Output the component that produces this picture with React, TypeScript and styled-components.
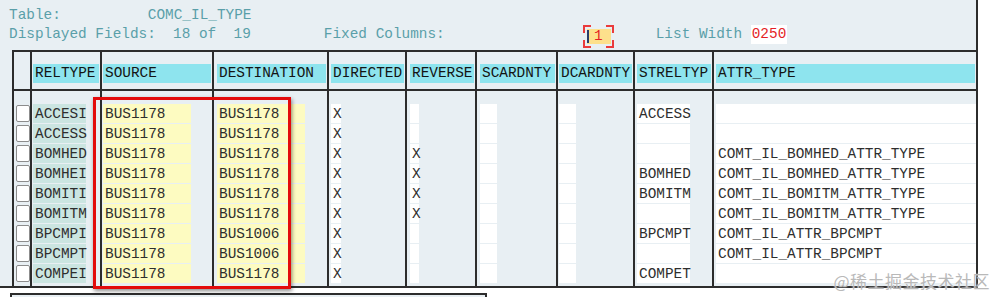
import styled, { createGlobalStyle } from "styled-components";

const GlobalStyle = createGlobalStyle`
  html, body {
    margin: 0;
    padding: 0;
    background: #ffffff;
  }
  body {
    font-family: "Liberation Mono", "DejaVu Sans Mono", monospace;
    font-size: 14.4px;
  }
`;

const Page = styled.div`
  position: relative;
  width: 994px;
  height: 297px;
  overflow: hidden;
  background: #ffffff;
`;

const Panel = styled.div`
  width: 976px;
  height: 286px;
  background: #e8eff3;
  border-right: 2px solid #2c2c2c;
  border-bottom: 2px solid #2c2c2c;
  display: flex;
  flex-direction: column;
`;

const Info = styled.div`
  height: 50px;
  padding: 6px 0 0 9px;
  box-sizing: border-box;
  display: flex;
  flex-direction: column;
`;

const InfoRow = styled.div`
  height: 19px;
  display: flex;
  align-items: center;
  white-space: pre;
  line-height: 19px;
`;

const Label = styled.span<{ $at?: number }>`
  color: #5a9fa9;
  margin-left: ${(p) => p.$at ?? 0}px;
`;

const FixedInput = styled.span`
  position: relative;
  width: 31px;
  height: 23px;
  margin: 0 0 -4px 138px;
  display: flex;
  align-items: center;
  justify-content: center;
  flex-shrink: 0;

  &::before {
    content: "";
    position: absolute;
    left: 4px;
    right: 3px;
    top: 4px;
    bottom: 4px;
    background: #fde08c;
  }
`;

const Caret = styled.span`
  position: absolute;
  left: 4px;
  top: 5px;
  width: 2px;
  height: 13px;
  background: #2a3d6a;
`;

const Corner = styled.span<{ $v: "top" | "bottom"; $h: "left" | "right" }>`
  position: absolute;
  ${(p) => p.$v}: 0;
  ${(p) => p.$h}: 0;
  width: 6px;
  height: 6px;
  border-${(p) => p.$v}: 2px solid #ea3b3b;
  border-${(p) => p.$h}: 2px solid #ea3b3b;
`;

const RedValue = styled.span<{ $bg?: string }>`
  position: relative;
  color: #e41e26;
  background: ${(p) => p.$bg ?? "transparent"};
  padding: 0 1px;
`;

const Table = styled.div`
  margin-left: 12px;
  flex: 1;
  display: grid;
  grid-template-columns: 18px 70px 112px 115px 78px 70px 81px 77px 79px 1fr;
`;

const Column = styled.div`
  border-left: 2px solid #2c2c2c;
  display: flex;
  flex-direction: column;
  min-width: 0;
`;

const Head = styled.div<{ $inset: number }>`
  height: 41px;
  box-sizing: border-box;
  border-top: 2px solid #2c2c2c;
  border-bottom: 2px solid #2c2c2c;
  padding: 12px 1px 0 ${(p) => p.$inset}px;
`;

const HeadLabel = styled.div`
  height: 19px;
  line-height: 19px;
  background: #8ee4ee;
  color: #141414;
  padding-left: 2px;
  white-space: nowrap;
  overflow: hidden;
`;

const Body = styled.div<{ $inset: number }>`
  padding: 13px 0 0 ${(p) => p.$inset}px;
  display: flex;
  flex-direction: column;
  gap: 1px;
`;

type CellKind = "key" | "input" | "plain";

const cellBg: Record<CellKind, string> = {
  key: "#cbe5e1",
  input: "#fdfbc1",
  plain: "#ffffff",
};

const Cell = styled.div<{ $kind: CellKind; $w?: number }>`
  height: 19px;
  line-height: 20px;
  width: ${(p) => (p.$w ? `${p.$w}px` : "auto")};
  background: ${(p) => cellBg[p.$kind]};
  color: #2e2e2e;
  padding-left: 2px;
  box-sizing: border-box;
  white-space: nowrap;
  overflow: visible;
`;

const Check = styled.div`
  width: 14px;
  height: 17px;
  margin-top: 1px;
  margin-bottom: 1px;
  box-sizing: border-box;
  background: #ffffff;
  border: 1px solid #8c8c8c;
  border-radius: 2px;
`;

const Highlight = styled.div`
  position: absolute;
  left: 93px;
  top: 97px;
  width: 198px;
  height: 192px;
  box-sizing: border-box;
  border: 3px solid #e30b0b;
  box-shadow: 1px 2px 4px rgba(0, 0, 0, 0.45);
  pointer-events: none;
`;

const Lower = styled.div`
  margin: 5px 0 0 10px;
  width: 477px;
  height: 20px;
  box-sizing: border-box;
  border: 2px solid #2c2c2c;
  background: #e8eff3;
`;

const Watermark = styled.div`
  position: absolute;
  right: 4px;
  top: 268px;
  font-family: "Noto Sans CJK SC", "Noto Sans", sans-serif;
  font-size: 17px;
  color: #b9b9b9;
  text-shadow: 0 0 2px #ffffff;
  letter-spacing: 0.5px;
`;

type Row = [string, string, string, string, string, string, string, string, string];

const rows: Row[] = [
  ["ACCESI", "BUS1178", "BUS1178", "X", "", "", "", "ACCESS", ""],
  ["ACCESS", "BUS1178", "BUS1178", "X", "", "", "", "", ""],
  ["BOMHED", "BUS1178", "BUS1178", "X", "X", "", "", "", "COMT_IL_BOMHED_ATTR_TYPE"],
  ["BOMHEI", "BUS1178", "BUS1178", "X", "X", "", "", "BOMHED", "COMT_IL_BOMHED_ATTR_TYPE"],
  ["BOMITI", "BUS1178", "BUS1178", "X", "X", "", "", "BOMITM", "COMT_IL_BOMITM_ATTR_TYPE"],
  ["BOMITM", "BUS1178", "BUS1178", "X", "X", "", "", "", "COMT_IL_BOMITM_ATTR_TYPE"],
  ["BPCMPI", "BUS1178", "BUS1006", "X", "", "", "", "BPCMPT", "COMT_IL_ATTR_BPCMPT"],
  ["BPCMPT", "BUS1178", "BUS1006", "X", "", "", "", "", "COMT_IL_ATTR_BPCMPT"],
  ["COMPEI", "BUS1178", "BUS1178", "X", "", "", "", "COMPET", ""],
];

interface ColumnDef {
  title: string;
  inset: number;
  kind: CellKind;
  width?: number;
}

const columns: ColumnDef[] = [
  { title: "RELTYPE", inset: 1, kind: "key", width: 53 },
  { title: "SOURCE", inset: 1, kind: "input", width: 88 },
  { title: "DESTINATION", inset: 3, kind: "input", width: 88 },
  { title: "DIRECTED", inset: 2, kind: "plain", width: 10 },
  { title: "REVERSE", inset: 3, kind: "plain", width: 9 },
  { title: "SCARDNTY", inset: 3, kind: "plain", width: 17 },
  { title: "DCARDNTY", inset: 1, kind: "plain", width: 17 },
  { title: "STRELTYP", inset: 2, kind: "plain", width: 53 },
  { title: "ATTR_TYPE", inset: 2, kind: "plain" },
];

export default function App() {
  return (
    <Page>
      <GlobalStyle />
      <Panel>
        <Info>
          <InfoRow>
            <Label>Table:</Label>
            <Label $at={87}>COMC_IL_TYPE</Label>
          </InfoRow>
          <InfoRow>
            <Label>Displayed Fields:  18 of  19</Label>
            <Label $at={73}>Fixed Columns:</Label>
            <FixedInput>
              <Corner $v="top" $h="left" />
              <Corner $v="top" $h="right" />
              <Corner $v="bottom" $h="left" />
              <Corner $v="bottom" $h="right" />
              <Caret />
              <RedValue>1</RedValue>
            </FixedInput>
            <Label $at={42}>List Width </Label>
            <RedValue $bg="#ffffff">0250</RedValue>
          </InfoRow>
        </Info>
        <Table>
          <Column>
            <Head $inset={0} />
            <Body $inset={2}>
              {rows.map((r) => (
                <Check key={r[0]} />
              ))}
            </Body>
          </Column>
          {columns.map((col, ci) => (
            <Column key={col.title}>
              <Head $inset={col.inset}>
                <HeadLabel>{col.title}</HeadLabel>
              </Head>
              <Body $inset={col.inset}>
                {rows.map((r) => (
                  <Cell key={r[0]} $kind={col.kind} $w={col.width}>
                    {r[ci]}
                  </Cell>
                ))}
              </Body>
            </Column>
          ))}
        </Table>
      </Panel>
      <Lower />
      <Highlight />
      <Watermark>@稀土掘金技术社区</Watermark>
    </Page>
  );
}
